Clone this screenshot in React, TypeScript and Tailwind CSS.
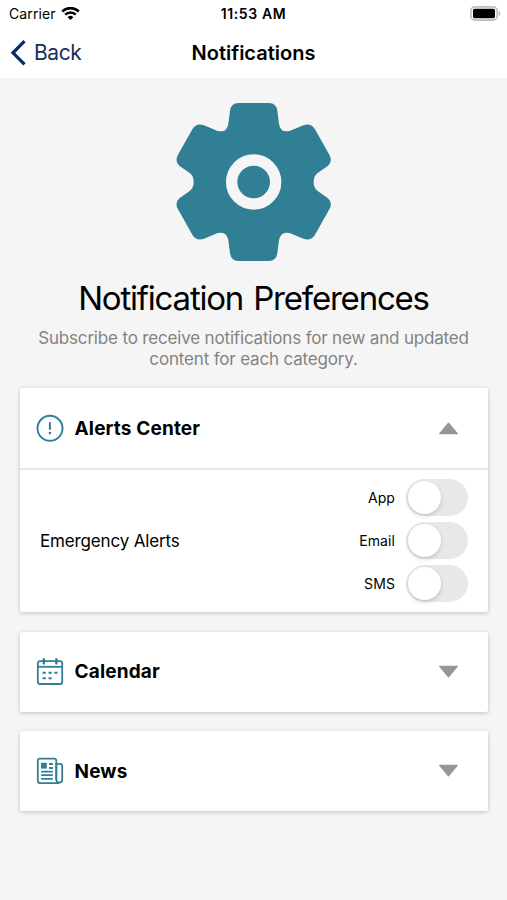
import { useState } from 'react';
import type { ReactNode } from 'react';
import clsx from 'clsx';

function WifiIcon() {
  return (
    <svg className="ml-[5px] h-[14px] w-[19px]" viewBox="0 0 19 14" fill="none" stroke="#000">
      <path d="M1.2 4.5a11.8 11.8 0 0 1 16.6 0" strokeWidth="2.6" />
      <path d="M4.2 7.7a7.5 7.5 0 0 1 10.6 0" strokeWidth="2.4" />
      <path d="M9.5 13.1 6.6 10.2a4.1 4.1 0 0 1 5.8 0z" fill="#000" stroke="none" />
    </svg>
  );
}

function BatteryIcon() {
  return (
    <svg className="h-[15px] w-[31px]" viewBox="0 0 31 15">
      <rect x="0.9" y="0.9" width="26.2" height="13.2" rx="4" fill="#fff" stroke="#bdbdbd" strokeWidth="1.6" />
      <rect x="3" y="2.8" width="22" height="9.4" rx="1.6" fill="#000" />
      <path d="M28.6 5.2c2.2.6 2.2 4 0 4.6z" fill="#ababab" />
    </svg>
  );
}

function GearIcon() {
  return (
    <svg className="h-[160px] w-[157px]" viewBox="30 36 471 480">
      <path
        fill="#317f95"
        d="M220 39H312Q334 39 337 63L342 101Q346 129 374 123L415 106Q438 98 450 118L493 194Q504 213 489 227L457 250Q446 259 446 276Q446 293 457 302L489 325Q504 339 493 358L450 434Q438 454 415 446L374 429Q346 423 342 451L337 489Q334 513 312 513H220Q198 513 195 489L190 451Q186 423 158 429L117 446Q94 454 82 434L39 358Q28 339 43 325L75 302Q86 293 86 276Q86 259 75 250L43 227Q28 213 39 194L82 118Q94 98 117 106L158 123Q186 129 190 101L195 63Q198 39 220 39Z"
      />
      <circle cx="266" cy="276" r="66" fill="none" stroke="#f5f5f5" strokeWidth="34" />
    </svg>
  );
}

function AlertIcon() {
  return (
    <svg className="size-7" viewBox="0 0 28 28" fill="none" stroke="#317f95">
      <circle cx="14" cy="14.3" r="12.5" strokeWidth="1.9" />
      <path d="M13.9 9v6" strokeWidth="2" strokeLinecap="round" />
      <circle cx="13.9" cy="19.1" r="1.3" fill="#317f95" stroke="none" />
    </svg>
  );
}

function CalendarIcon() {
  return (
    <svg className="size-7" viewBox="0 0 28 28" fill="none" stroke="#317f95" strokeWidth="1.8">
      <rect x="1.8" y="3.2" width="24.4" height="22.8" rx="2" />
      <path d="M2 8.8h24.2" />
      <path d="M7.8 1.2v4.2M20.4 1.2v4.2" strokeWidth="2.4" strokeLinecap="round" />
      <path d="M6.6 14.7h3.2M12.5 14.7h3.2M18.3 14.7h3.2M6.6 20.3h3.2M12.5 20.3h3.2" strokeWidth="2" />
    </svg>
  );
}

function NewsIcon() {
  return (
    <svg className="size-7" viewBox="0 0 28 28" fill="none" stroke="#317f95" strokeWidth="1.8">
      <path d="M20.3 22.8V3.6a2 2 0 0 0-2-2H3.8a2 2 0 0 0-2 2v20.2a2.4 2.4 0 0 0 2.4 2.4h19" />
      <path d="M20.3 6.8h3.9a2 2 0 0 1 2 2v14.4a3 3 0 0 1-5.9 0z" />
      <rect x="5" y="5.8" width="5.8" height="5.8" fill="#317f95" stroke="none" />
      <path d="M13 7h4M13 11h4M5.2 14.6h11.6M5.2 18.2h11.6M5.2 21.9h11.6" />
    </svg>
  );
}

function Toggle({ label }: { label: string }) {
  const [on, setOn] = useState(false);

  return (
    <div className="flex h-[37px] items-center gap-[10.5px]">
      <span className="text-[14px] tracking-[0.1px]">{label}</span>
      <button
        role="switch"
        aria-checked={on}
        aria-label={label}
        onClick={() => setOn(!on)}
        className={clsx(
          'flex h-[37px] w-[62px] items-center rounded-full px-[2px]',
          on ? 'justify-end bg-[#317f95]' : 'bg-[#e8e8ea]'
        )}
      >
        <span className="size-[33px] rounded-full bg-white shadow-[0_2px_4px_rgba(0,0,0,0.16)]" />
      </button>
    </div>
  );
}

type SectionProps = {
  title: string;
  icon: ReactNode;
  defaultOpen?: boolean;
  children?: ReactNode;
};

function Section({ title, icon, defaultOpen = false, children }: SectionProps) {
  const [open, setOpen] = useState(defaultOpen);

  return (
    <section className="rounded-[2px] bg-white shadow-[0_1px_4px_rgba(0,0,0,0.22)]">
      <button onClick={() => setOpen(!open)} className="flex h-20 w-full items-center pr-[29px] pl-4">
        {icon}
        <span className="ml-[11px] pt-[2px] text-[19px] font-bold tracking-[0.15px]">{title}</span>
        <svg className={clsx('ml-auto h-[14px] w-[21px]', !open && 'rotate-180')} viewBox="0 0 21 14">
          <path
            d="M10.5 2.2 19.3 12.7H1.7z"
            fill="#969696"
            stroke="#969696"
            strokeWidth="1.2"
            strokeLinejoin="round"
          />
        </svg>
      </button>
      {open && children}
    </section>
  );
}

export default function App() {
  return (
    <div className="min-h-screen bg-[#f5f5f5] font-['Inter',sans-serif] text-black">
      <header className="h-[78px] bg-white">
        <div className="grid h-[27px] grid-cols-3 items-center pr-[6px] pl-[9px] text-[14px]">
          <div className="flex items-center">
            <span className="tracking-[0.1px]">Carrier</span>
            <WifiIcon />
          </div>
          <span className="pr-[3px] text-center font-semibold tracking-[0.6px]">11:53 AM</span>
          <div className="flex justify-end">
            <BatteryIcon />
          </div>
        </div>
        <div className="grid h-[51px] grid-cols-3 items-center px-[10px]">
          <button className="flex items-center text-[21px] tracking-[-0.4px] text-[#14305f]">
            <svg className="mr-[8px] h-[26px] w-4" viewBox="0 0 16 26" fill="none">
              <path d="M14.5 1.2 3 12.8 14.5 24.4" stroke="#062a62" strokeWidth="3.2" />
            </svg>
            Back
          </button>
          <h1 className="text-center text-[20px] font-semibold">Notifications</h1>
        </div>
      </header>

      <main className="px-[19.5px] pt-6">
        <div className="flex justify-center">
          <GearIcon />
        </div>
        <h2 className="mt-[15px] text-center text-[33px] leading-[42px] tracking-[-1.2px] [word-spacing:2px]">
          Notification Preferences
        </h2>
        <p className="mt-[9px] text-center text-[17px] leading-[21px] tracking-[-0.17px] text-[#838383]">
          Subscribe to receive notifications for new and updated
          <br />
          content for each category.
        </p>

        <div className="mt-[18px] flex flex-col gap-[19.5px]">
          <Section title="Alerts Center" icon={<AlertIcon />} defaultOpen>
            <div className="flex h-[144px] items-center justify-between border-t-2 border-[#e6e6e6] px-5">
              <span className="pt-px pl-[0.5px] text-[17px] tracking-[-0.15px]">Emergency Alerts</span>
              <div className="-mt-[2px] flex flex-col items-end gap-[6px]">
                <Toggle label="App" />
                <Toggle label="Email" />
                <Toggle label="SMS" />
              </div>
            </div>
          </Section>
          <Section title="Calendar" icon={<CalendarIcon />} />
          <Section title="News" icon={<NewsIcon />} />
        </div>
      </main>
    </div>
  );
}
